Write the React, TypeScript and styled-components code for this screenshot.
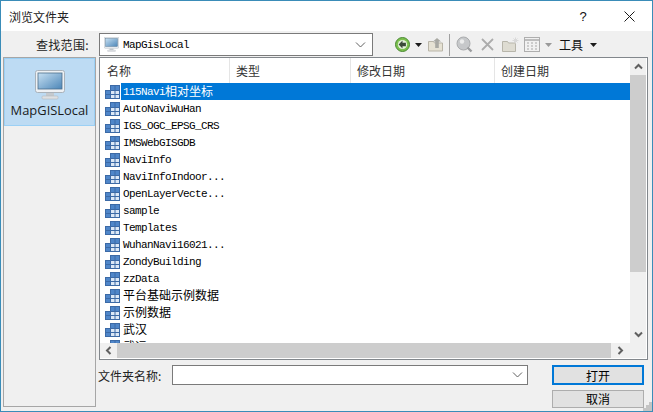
import React from "react";
import styled, { createGlobalStyle } from "styled-components";

const CJK = '"Noto Sans CJK SC", "Noto Sans", sans-serif';
const MONO = '"Liberation Mono", "Noto Sans CJK SC", monospace';

const folders = [
  "115Navi相对坐标",
  "AutoNaviWuHan",
  "IGS_OGC_EPSG_CRS",
  "IMSWebGISGDB",
  "NaviInfo",
  "NaviInfoIndoor...",
  "OpenLayerVecte...",
  "sample",
  "Templates",
  "WuhanNavi16021...",
  "ZondyBuilding",
  "zzData",
  "平台基础示例数据",
  "示例数据",
  "武汉",
  "武运",
];

const columns = [
  { label: "名称", width: 130 },
  { label: "类型", width: 121 },
  { label: "修改日期", width: 144 },
  { label: "创建日期", width: 136 },
];

// latin names run at 6px per character, chinese at 12px
function MixedText({ text }: { text: string }) {
  return (
    <>
      {text.split(/([\u4e00-\u9fff]+)/).map((part, i) =>
        /[\u4e00-\u9fff]/.test(part) ? <Han key={i}>{part}</Han> : <Latin key={i}>{part}</Latin>
      )}
    </>
  );
}

function TableIcon() {
  return (
    <svg width="15" height="14" viewBox="0 0 15 14">
      <rect x="0.5" y="5.5" width="14" height="8" fill="#dce8f6" stroke="#3c6aa6" />
      <rect x="5.5" y="0.5" width="9" height="5" fill="#4f86c9" stroke="#3c6aa6" />
      <rect x="0.5" y="5.5" width="5" height="8" fill="#4f86c9" stroke="#3c6aa6" />
      <path d="M10 1v12M1 9.5h13M6 5.5h8" stroke="#3c6aa6" fill="none" />
    </svg>
  );
}

function MonitorIcon({ size }: { size: number }) {
  return (
    <svg width={size} height={size} viewBox="0 0 30 30">
      <rect x="0.5" y="0.5" width="29" height="22" rx="2" fill="#eef1f4" stroke="#a9b2ba" />
      <defs>
        <linearGradient id="screen" x1="0" y1="0" x2="1" y2="1">
          <stop offset="0" stopColor="#c7e0f2" />
          <stop offset="1" stopColor="#4c86b8" />
        </linearGradient>
      </defs>
      <rect x="3" y="3" width="24" height="16" fill="url(#screen)" stroke="#4d6f8c" strokeWidth="0.8" />
      <rect x="11" y="23" width="8" height="3" fill="#c4c9ce" />
      <rect x="7" y="26" width="16" height="3" rx="1" fill="#dde0e3" stroke="#b4b9be" strokeWidth="0.6" />
    </svg>
  );
}

function BackIcon() {
  return (
    <svg width="15" height="15" viewBox="0 0 15 15">
      <circle cx="7.5" cy="7.5" r="7" fill="#7cc04f" stroke="#4a8a32" />
      <circle cx="7.5" cy="7.5" r="4.6" fill="#e6f3dc" />
      <path d="M7.5 3.6 3.6 7.5l3.9 3.9V9.2h3.4V5.8H7.5z" fill="#3b4a3a" />
    </svg>
  );
}

function FolderUpIcon() {
  return (
    <svg width="17" height="15" viewBox="0 0 17 15">
      <path d="M1.5 4.5h5l1 1.5h8v8h-14z" fill="#e6e2d4" stroke="#b9b5a8" />
      <path d="M10 1l4 3.4h-2.2V11H8.2V4.4H6z" fill="#a9a9a3" />
    </svg>
  );
}

function SearchIcon() {
  return (
    <svg width="17" height="17" viewBox="0 0 17 17">
      <circle cx="7.5" cy="7.5" r="6.5" fill="#c6c8ca" stroke="#a9abad" />
      <circle cx="6" cy="5.5" r="2.2" fill="#eceded" />
      <path d="M11.5 11.5l4 4" stroke="#9b9d9f" strokeWidth="2.4" />
    </svg>
  );
}

function DeleteIcon() {
  return (
    <svg width="13" height="13" viewBox="0 0 13 13">
      <path d="M1 1l11 11M12 1L1 12" stroke="#acacac" strokeWidth="1.8" />
    </svg>
  );
}

function NewFolderIcon() {
  return (
    <svg width="17" height="15" viewBox="0 0 17 15">
      <path d="M0.5 4.5h5l1 1.500h7v8.500h-13z" fill="#dedcd2" stroke="#b7b5aa" />
      <path d="M13.500 0.500v6M10.500 3.500h6M11.500 1.500l4 4M15.500 1.500l-4 4" stroke="#d9d9d9" />
    </svg>
  );
}

function ViewsIcon() {
  return (
    <svg width="16" height="15" viewBox="0 0 16 15">
      <rect x="0.5" y="0.5" width="15" height="14" fill="#f1f1f1" stroke="#aeaeae" />
      <path d="M1 3h14" stroke="#bdbdbd" strokeWidth="2" />
      <path d="M3 6h2M7 6h2M11 6h2M3 9h2M7 9h2M11 9h2M3 12h2M7 12h2M11 12h2" stroke="#a7a7a7" />
    </svg>
  );
}

function Caret({ muted }: { muted?: boolean }) {
  return (
    <svg width="7" height="4" viewBox="0 0 7 4">
      <path d="M0 0h7L3.500 4z" fill={muted ? "#9a9a9a" : "#1c1c1c"} />
    </svg>
  );
}

function ComboChevron() {
  return (
    <svg width="11" height="6" viewBox="0 0 11 6">
      <path d="M1 0.500l4.500 4.500 4.500-4.500" fill="none" stroke="#606060" />
    </svg>
  );
}

function ScrollArrow({ rotate }: { rotate: number }) {
  return (
    <svg width="9" height="7" viewBox="0 0 9 7" style={{ transform: `rotate(${rotate}deg)` }}>
      <path d="M1 5.500l3.500-3.500 3.500 3.500" fill="none" stroke="#606060" strokeWidth="2" />
    </svg>
  );
}

function CloseIcon() {
  return (
    <svg width="11" height="11" viewBox="0 0 11 11">
      <path d="M0.500 0.500l10 10M10.500 0.500l-10 10" stroke="#1a1a1a" />
    </svg>
  );
}

function ResizeGrip() {
  return (
    <svg width="9" height="9" viewBox="0 0 9 9">
      <path d="M6 0h3v3H6zM3 3h3v3H3zM6 3h3v3H6zM0 6h3v3H0zM3 6h3v3H3zM6 6h3v3H6z" fill="#c4c4c4" />
    </svg>
  );
}

export default function App() {
  return (
    <Dialog>
      <GlobalStyle />
      <TitleBar>
        <TitleText>浏览文件夹</TitleText>
        <HelpButton>?</HelpButton>
        <CloseButton>
          <CloseIcon />
        </CloseButton>
      </TitleBar>
      <LookInRow>
        <LookInLabel>查找范围:</LookInLabel>
        <Combo>
          <MonitorIcon size={15} />
          <ComboText>MapGisLocal</ComboText>
          <ComboChevron />
        </Combo>
        <Toolbar>
          <ToolButton $after={5}>
            <BackIcon />
          </ToolButton>
          <ToolButton $after={5}>
            <Caret />
          </ToolButton>
          <ToolButton $after={5}>
            <FolderUpIcon />
          </ToolButton>
          <ToolDivider />
          <ToolButton $after={8}>
            <SearchIcon />
          </ToolButton>
          <ToolButton $after={8}>
            <DeleteIcon />
          </ToolButton>
          <ToolButton $after={5}>
            <NewFolderIcon />
          </ToolButton>
          <ToolButton $after={5}>
            <ViewsIcon />
          </ToolButton>
          <ToolButton $after={7}>
            <Caret muted />
          </ToolButton>
          <ToolsMenu>工具</ToolsMenu>
          <ToolButton $after={0}>
            <Caret />
          </ToolButton>
        </Toolbar>
      </LookInRow>
      <Content>
        <Places>
          <PlaceItem>
            <MonitorIcon size={30} />
            <PlaceLabel>MapGISLocal</PlaceLabel>
          </PlaceItem>
        </Places>
        <MainColumn>
          <ListFrame>
            <ListPane>
              <HeaderRow>
                {columns.map((col) => (
                  <HeaderCell key={col.label} $width={col.width}>
                    {col.label}
                  </HeaderCell>
                ))}
              </HeaderRow>
              <Rows>
                {folders.map((name, i) => (
                  <Row key={name}>
                    <TableIcon />
                    <RowName $selected={i === 0}>
                      <MixedText text={name} />
                    </RowName>
                  </Row>
                ))}
              </Rows>
            </ListPane>
            <VerticalBar>
              <ArrowBox $height={17}>
                <ScrollArrow rotate={0} />
              </ArrowBox>
              <VerticalThumb />
              <ArrowBox $height={17}>
                <ScrollArrow rotate={180} />
              </ArrowBox>
            </VerticalBar>
            <HorizontalBar>
              <ArrowBox $width={17}>
                <ScrollArrow rotate={270} />
              </ArrowBox>
              <HorizontalThumb />
              <ArrowBox $width={19}>
                <ScrollArrow rotate={90} />
              </ArrowBox>
            </HorizontalBar>
            <ScrollCorner />
          </ListFrame>
          <Footer>
            <FooterLabel>文件夹名称:</FooterLabel>
            <NameInput>
              <ComboChevron />
            </NameInput>
            <DialogButton $primary>打开</DialogButton>
            <DialogButton $row={2}>取消</DialogButton>
          </Footer>
        </MainColumn>
      </Content>
      <GripSlot>
        <ResizeGrip />
      </GripSlot>
    </Dialog>
  );
}

const GlobalStyle = createGlobalStyle`
  html, body {
    margin: 0;
    padding: 0;
    background: #f0f0f0;
  }
`;

const Dialog = styled.div`
  position: relative;
  box-sizing: border-box;
  width: 653px;
  height: 412px;
  display: flex;
  flex-direction: column;
  border: 1px solid #3a8cb8;
  background: #f0f0f0;
  font-family: ${CJK};
  font-size: 12px;
  color: #000;
  overflow: hidden;
`;

const TitleBar = styled.div`
  display: flex;
  align-items: center;
  height: 30px;
  flex: none;
  background: #fff;
  padding-left: 8px;
`;

const TitleText = styled.div`
  flex: 1;
  font-size: 12px;
  color: #222;
`;

const HelpButton = styled.div`
  width: 46px;
  text-align: center;
  font-family: "Liberation Sans", sans-serif;
  font-size: 13px;
  color: #111;
`;

const CloseButton = styled.div`
  display: flex;
  justify-content: center;
  width: 46px;
`;

const LookInRow = styled.div`
  display: flex;
  align-items: center;
  height: 26px;
  flex: none;
  padding-top: 1px;
  box-sizing: border-box;
`;

const LookInLabel = styled.div`
  width: 98px;
  box-sizing: border-box;
  padding-left: 35px;
  color: #222;
  letter-spacing: 0.3px;
`;

const Combo = styled.div`
  display: flex;
  align-items: center;
  box-sizing: border-box;
  width: 274px;
  height: 23px;
  gap: 4px;
  padding: 0 6px 0 4px;
  background: #fff;
  border: 1px solid #7a7a7a;
`;

const ComboText = styled.span`
  flex: 1;
  font-family: ${MONO};
  font-size: 11px;
  letter-spacing: -0.6px;
`;

const Toolbar = styled.div`
  display: flex;
  align-items: center;
  margin-left: 22px;
`;

const ToolButton = styled.div<{ $after: number }>`
  display: flex;
  align-items: center;
  justify-content: center;
  margin-right: ${(p) => p.$after}px;
`;

const ToolDivider = styled.div`
  width: 1px;
  height: 22px;
  background: #a0a0a0;
  margin-right: 6px;
`;

const ToolsMenu = styled.div`
  width: 24px;
  margin-right: 7px;
  font-size: 12px;
  color: #111;
`;

const Content = styled.div`
  display: flex;
  flex: 1;
  min-height: 0;
  padding: 0 4px 4px 2px;
`;

const Places = styled.div`
  box-sizing: border-box;
  width: 93px;
  flex: none;
  margin-right: 3px;
  padding: 0;
  border: 1px solid #a6a6a6;
  background: #f0f0f0;
`;

const PlaceItem = styled.div`
  display: flex;
  flex-direction: column;
  align-items: center;
  box-sizing: border-box;
  height: 68px;
  padding-top: 11px;
  background: #bddbf3;
  border: 1px solid #9bd0f5;
`;

const PlaceLabel = styled.div`
  margin-top: 2px;
  font-family: "Open Sans", "Noto Sans", sans-serif;
  font-size: 12.9px;
  line-height: 16px;
  color: #1a1a1a;
  white-space: nowrap;
`;

const MainColumn = styled.div`
  display: flex;
  flex-direction: column;
  flex: 1;
  min-width: 0;
`;

const ListFrame = styled.div`
  display: grid;
  grid-template-columns: 1fr 16px;
  grid-template-rows: 1fr 15px;
  box-sizing: border-box;
  height: 303px;
  flex: none;
  border: 1px solid #82878c;
  background: #fff;
  padding: 0 1px 1px 0;
`;

const ListPane = styled.div`
  min-height: 0;
  overflow: hidden;
  background: #fff;
`;

const HeaderRow = styled.div`
  display: flex;
  height: 25px;
`;

const HeaderCell = styled.div<{ $width: number }>`
  box-sizing: border-box;
  width: ${(p) => p.$width}px;
  flex: none;
  padding-left: 6px;
  line-height: 25px;
  color: #333;
  border-right: 1px solid #e5e5e5;
  &:first-child {
    padding-left: 7px;
  }
  &:last-child {
    border-right: none;
  }
`;

const Rows = styled.div`
  padding-left: 5px;
`;

const Row = styled.div`
  display: flex;
  align-items: center;
  height: 17px;
`;

const RowName = styled.div<{ $selected?: boolean }>`
  flex: 1;
  height: 17px;
  line-height: 17px;
  margin-left: 1px;
  padding-left: 2px;
  font-family: ${MONO};
  font-size: 11px;
  white-space: nowrap;
  color: ${(p) => (p.$selected ? "#fff" : "#000")};
  background: ${(p) => (p.$selected ? "#0078d7" : "transparent")};
`;

const Latin = styled.span`
  line-height: 1;
  letter-spacing: -0.6px;
  vertical-align: -1px;
`;

const Han = styled.span`
  font-family: ${CJK};
  font-size: 12px;
  line-height: 1;
  vertical-align: -2px;
`;

const VerticalBar = styled.div`
  display: flex;
  flex-direction: column;
  background: #f0f0f0;
`;

const VerticalThumb = styled.div`
  height: 197px;
  margin-bottom: auto;
  background: #cdcdcd;
`;

const HorizontalBar = styled.div`
  display: flex;
  background: #f0f0f0;
`;

const HorizontalThumb = styled.div`
  flex: 1;
  background: #cdcdcd;
`;

const ArrowBox = styled.div<{ $width?: number; $height?: number }>`
  display: flex;
  align-items: center;
  justify-content: center;
  flex: none;
  width: ${(p) => (p.$width ? `${p.$width}px` : "auto")};
  height: ${(p) => (p.$height ? `${p.$height}px` : "auto")};
`;

const ScrollCorner = styled.div`
  background: #f0f0f0;
`;

const Footer = styled.div`
  display: grid;
  grid-template-columns: 74px 380px 92px;
  grid-template-rows: 20px 19px;
  row-gap: 4px;
  margin-top: 5px;
  margin-left: -1px;
  align-items: center;
`;

const FooterLabel = styled.div`
  color: #222;
  white-space: nowrap;
`;

const NameInput = styled.div`
  display: flex;
  align-items: center;
  justify-content: flex-end;
  box-sizing: border-box;
  height: 20px;
  margin-right: 24px;
  padding-right: 4px;
  background: #fff;
  border: 1px solid #7a7a7a;
`;

const DialogButton = styled.div<{ $primary?: boolean; $row?: number }>`
  grid-column: 3;
  grid-row: ${(p) => p.$row ?? 1};
  display: flex;
  align-items: center;
  justify-content: center;
  box-sizing: border-box;
  height: ${(p) => (p.$primary ? 20 : 18)}px;
  font-size: 12px;
  background: #e1e1e1;
  border: ${(p) => (p.$primary ? "2px solid #0078d7" : "1px solid #adadad")};
`;

const GripSlot = styled.div`
  position: absolute;
  right: 0;
  bottom: 0;
  display: flex;
  line-height: 0;
`;
